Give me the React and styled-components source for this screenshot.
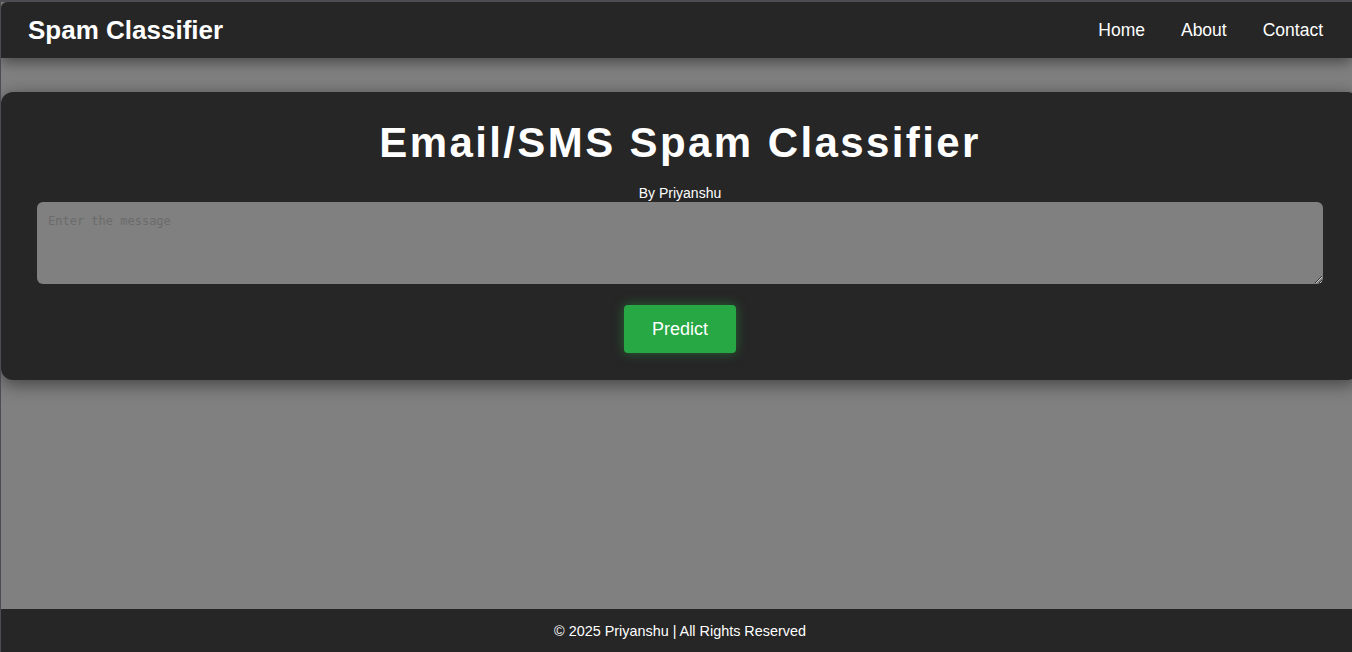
import React from "react";
import styled, { createGlobalStyle } from "styled-components";

const Global = createGlobalStyle`
  html, body { margin: 0; padding: 0; height: 100%; }
  html { background: #4c4c52; }
  body {
    box-sizing: border-box;
    border-top: 2px solid #4c4c52;
    border-left: 1px solid #4c4c52;
    background: #808080;
    font-family: "Liberation Sans", Arial, sans-serif;
    color: #fff;
    overflow: hidden;
  }
  #root { height: 100%; }
`;

const Page = styled.div`
  display: flex;
  flex-direction: column;
  height: 100%;
`;

const Navbar = styled.nav`
  position: relative;
  z-index: 2;
  display: flex;
  align-items: center;
  justify-content: space-between;
  height: 56px;
  padding: 0 29px 0 27px;
  background: #262626;
  border-top-left-radius: 6px;
  box-shadow: 0 4px 14px rgba(0, 0, 0, 0.45);
  flex-shrink: 0;
`;

const Logo = styled.div`
  font-size: 26px;
  font-weight: 700;
`;

const Links = styled.div`
  display: flex;
  gap: 36px;
`;

const NavLink = styled.a`
  color: #fff;
  text-decoration: none;
  font-size: 17.5px;
`;

const Main = styled.main`
  flex: 1;
  padding-top: 34px;
`;

const Card = styled.section`
  box-sizing: border-box;
  width: calc(100% + 7px);
  padding: 20px 36px 27px;
  background: #262626;
  border-radius: 12px;
  box-shadow: 0 4px 18px rgba(0, 0, 0, 0.5);
  display: flex;
  flex-direction: column;
  align-items: center;
`;

const Title = styled.h1`
  margin: 0;
  font-size: 42px;
  font-weight: 700;
  letter-spacing: 2.4px;
  line-height: 62px;
`;

const Byline = styled.p`
  margin: 10px 0 0;
  font-size: 14px;
  line-height: 18px;
`;

const Message = styled.textarea`
  box-sizing: border-box;
  width: 100%;
  height: 82px;
  margin: 0;
  padding: 12px 11px;
  border: none;
  border-radius: 6px;
  background: #808080;
  color: #fff;
  font-family: "DejaVu Sans Mono", "Liberation Mono", monospace;
  font-size: 12px;
  outline: none;
  &::placeholder { color: #6b6b6b; }
`;

const PredictButton = styled.button`
  margin-top: 21px;
  width: 112px;
  height: 48px;
  border: none;
  border-radius: 4px;
  background: #28a745;
  color: #fff;
  font-family: "Liberation Sans", Arial, sans-serif;
  font-size: 18px;
  box-shadow: 0 0 12px rgba(40, 167, 69, 0.5);
  cursor: pointer;
`;

const Footer = styled.footer`
  box-sizing: border-box;
  width: calc(100% + 7px);
  height: 43px;
  flex-shrink: 0;
  background: #262626;
  display: flex;
  align-items: center;
  justify-content: center;
  font-size: 14.4px;
`;

export default function App() {
  return (
    <>
      <Global />
      <Page>
        <Navbar>
          <Logo>Spam Classifier</Logo>
          <Links>
            <NavLink href="#">Home</NavLink>
            <NavLink href="#">About</NavLink>
            <NavLink href="#">Contact</NavLink>
          </Links>
        </Navbar>
        <Main>
          <Card>
            <Title>Email/SMS Spam Classifier</Title>
            <Byline>By Priyanshu</Byline>
            <Message placeholder="Enter the message" />
            <PredictButton>Predict</PredictButton>
          </Card>
        </Main>
        <Footer>© 2025 Priyanshu | All Rights Reserved</Footer>
      </Page>
    </>
  );
}
